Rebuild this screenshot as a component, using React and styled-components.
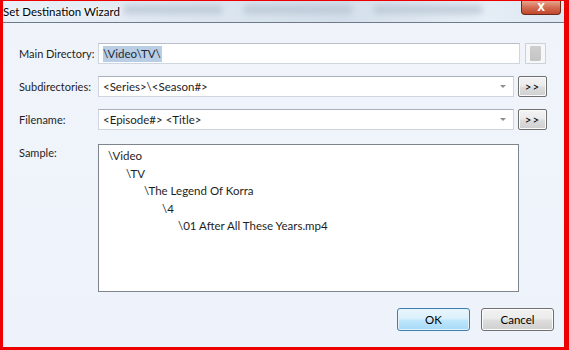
import React from "react";
import styled, { createGlobalStyle } from "styled-components";

const Global = createGlobalStyle`
  html, body { margin: 0; padding: 0; background: #e00000; }
  body { font-family: Lato, "Open Sans", sans-serif; }
`;

const Frame = styled.div`
  width: 569px;
  height: 350px;
  box-sizing: border-box;
  border-style: solid;
  border-color: #ee0000;
  border-width: 1px 5px 3px 3px;
  display: flex;
  flex-direction: column;
  background: #eff4fb;
  overflow: hidden;
`;

const TitleBar = styled.div`
  height: 21px;
  flex: none;
  display: flex;
  align-items: flex-start;
  justify-content: space-between;
  background: linear-gradient(90deg, #e9f0f8 0%, #dfe8f2 30%, #d4dfeb 60%, #e6eef6 85%, #dde7f1 100%);
  border-bottom: 1px solid #6d7a88;
  position: relative;
`;

const TitleText = styled.div`
  position: relative;
  font-size: 11.5px;
  color: #000;
  padding: 3px 0 0 0;
  line-height: 16px;
  text-shadow: 0 0 6px #fff, 0 0 3px #fff;
`;

const Blur = styled.div`
  position: absolute;
  top: 4px;
  height: 9px;
  border-radius: 5px;
  background: #b9c6d4;
  filter: blur(3px);
  opacity: 0.8;
`;

const CloseBtn = styled.div`
  width: 38px;
  height: 13px;
  margin-right: 3px;
  border: 1px solid #6b2a1e;
  border-top: none;
  border-radius: 0 0 4px 4px;
  background: linear-gradient(#e9a490 0%, #d26c52 50%, #c1462b 100%);
  display: flex;
  align-items: center;
  justify-content: center;
  color: #fff;
  font-size: 10px;
  font-weight: bold;
  font-family: "DejaVu Sans", sans-serif;
  line-height: 1;
`;

const Client = styled.div`
  flex: 1;
  display: flex;
  flex-direction: column;
  padding: 20px 10px 0 16px;
  background: linear-gradient(#f0f4fa, #eef3fb);
`;

const Row = styled.div`
  display: flex;
  align-items: ${(p) => (p.$top ? "flex-start" : "center")};
  height: ${(p) => p.$h || 21}px;
  margin-bottom: ${(p) => p.$mb ?? 12}px;
`;

const Label = styled.div`
  width: 79px;
  flex: none;
  font-size: 11px;
  color: #1e1e1e;
  white-space: nowrap;
  padding-top: ${(p) => (p.$top ? "1px" : "0")};
  line-height: 16px;
`;

const TextBox = styled.div`
  width: 422px;
  height: 21px;
  box-sizing: border-box;
  border: 1px solid #cfd6e0;
  border-top-color: #b8bfca;
  background: #fff;
  display: flex;
  align-items: center;
  padding-left: 4px;
  font-size: 11.5px;
`;

const Selected = styled.span`
  background: #b9cde4;
  color: #1a2a3a;
  line-height: 16px;
  padding: 0 1px 0 0;
`;

const BrowseBtn = styled.div`
  width: 21px;
  height: 21px;
  margin-left: 5px;
  box-sizing: border-box;
  border: 1px solid #cdd2d8;
  background: #f6f7f9;
  display: flex;
  align-items: center;
  justify-content: center;
`;

const BrowseInner = styled.div`
  width: 11px;
  height: 15px;
  background: linear-gradient(#cfcfcf, #c4c4c4);
  border-radius: 1px 1px 2px 1px;
`;

const Combo = styled.div`
  width: 416px;
  height: 21px;
  box-sizing: border-box;
  border: 1px solid #cfd6e0;
  border-top-color: #aab1bc;
  background: #fff;
  display: flex;
  align-items: center;
  justify-content: space-between;
  padding: 0 7px 0 4px;
  font-size: 11.5px;
  color: #1e1e1e;
  white-space: nowrap;
`;

const Arrow = styled.div`
  width: 0;
  height: 0;
  border-left: 3px solid transparent;
  border-right: 3px solid transparent;
  border-top: 3px solid #8a8f96;
`;

const SmallBtn = styled.div`
  width: 29px;
  height: 21px;
  margin-left: 4px;
  box-sizing: border-box;
  border: 1px solid #6f6f6f;
  border-radius: 2px;
  background: linear-gradient(#f3f3f3 0%, #ebebeb 45%, #dcdcdc 55%, #cfcfcf 100%);
  box-shadow: inset 0 0 0 1px #fbfbfb;
  display: flex;
  align-items: center;
  justify-content: center;
  font-size: 11.5px;
  color: #000;
  letter-spacing: 1px;
`;

const Sample = styled.div`
  width: 421px;
  height: 148px;
  box-sizing: border-box;
  border: 1px solid #7f858d;
  background: #fff;
  padding: 2px 0 0 9px;
  font-size: 11.5px;
  color: #1e1e1e;
`;

const Line = styled.div`
  height: 17.5px;
  line-height: 17px;
  padding-left: ${(p) => p.$level * 18 - (p.$level > 3 ? 2 : 0)}px;
  white-space: nowrap;
`;

const Footer = styled.div`
  display: flex;
  justify-content: flex-end;
  gap: 11px;
  padding-top: 16px;
`;

const DlgBtn = styled.div`
  width: 73px;
  height: 23px;
  box-sizing: border-box;
  border: 1px solid ${(p) => (p.$default ? "#3c7fb1" : "#707070")};
  border-radius: 3px;
  background: ${(p) =>
    p.$default
      ? "linear-gradient(#eaf6fd 0%, #d9f0fc 45%, #bee6fd 55%, #a7d9f5 100%)"
      : "linear-gradient(#f2f2f2 0%, #ebebeb 45%, #dddddd 55%, #cfcfcf 100%)"};
  box-shadow: inset 0 0 0 1px ${(p) => (p.$default ? "#e4f3fb" : "#fcfcfc")};
  display: flex;
  align-items: center;
  justify-content: center;
  font-size: 11.5px;
  color: #000;
`;

const lines = [
  "\\Video",
  "\\TV",
  "\\The Legend Of Korra",
  "\\4",
  "\\01 After All These Years.mp4",
];

export default function App() {
  return (
    <>
      <Global />
      <Frame>
        <TitleBar>
          <Blur style={{ left: 120, width: 100 }} />
          <Blur style={{ left: 240, width: 110 }} />
          <Blur style={{ left: 370, width: 110 }} />
          <TitleText>Set Destination Wizard</TitleText>
          <CloseBtn>X</CloseBtn>
        </TitleBar>
        <Client>
          <Row>
            <Label>Main Directory:</Label>
            <TextBox>
              <Selected>\Video\TV\</Selected>
            </TextBox>
            <BrowseBtn>
              <BrowseInner />
            </BrowseBtn>
          </Row>
          <Row>
            <Label>Subdirectories:</Label>
            <Combo>
              <span>&lt;Series&gt;\&lt;Season#&gt;</span>
              <Arrow />
            </Combo>
            <SmallBtn>&gt;&gt;</SmallBtn>
          </Row>
          <Row $mb={14}>
            <Label>Filename:</Label>
            <Combo>
              <span>&lt;Episode#&gt; &lt;Title&gt;</span>
              <Arrow />
            </Combo>
            <SmallBtn>&gt;&gt;</SmallBtn>
          </Row>
          <Row $top $h={148} $mb={0}>
            <Label $top>Sample:</Label>
            <Sample>
              {lines.map((l, i) => (
                <Line key={i} $level={i}>
                  {l}
                </Line>
              ))}
            </Sample>
          </Row>
          <Footer>
            <DlgBtn $default>OK</DlgBtn>
            <DlgBtn>Cancel</DlgBtn>
          </Footer>
        </Client>
      </Frame>
    </>
  );
}
